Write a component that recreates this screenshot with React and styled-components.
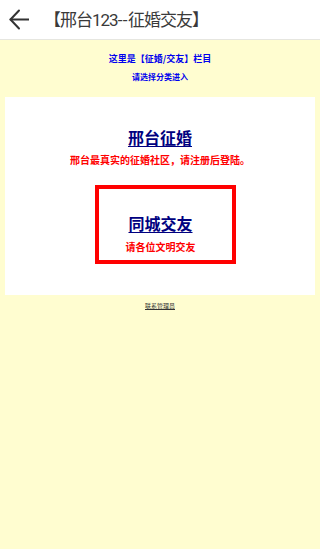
import React from 'react'
import styled, { createGlobalStyle } from 'styled-components'

const GlobalStyle = createGlobalStyle`
    html, body {
        margin: 0;
        padding: 0;
        background-color: #FFFDD0;
        font-family: "Noto Sans CJK SC", "Noto Sans", sans-serif;
    }
`

const Cabecalho = styled.div`
    height: 40px;
    background-color: #ffffff;
    border-bottom: 1px solid #e6e6e0;
    box-sizing: border-box;
    display: flex;
    align-items: center;
    padding-left: 9px;
`

const BotaoVoltar = styled.svg`
    width: 20px;
    height: 21px;
    flex-shrink: 0;
`

const TituloCabecalho = styled.div`
    margin-left: 15px;
    font-family: Roboto, "Noto Sans CJK SC", sans-serif;
    font-size: 17px;
    letter-spacing: -1px;
    color: #3a3a3a;
    line-height: 40px;
`

const Tracos = styled.span`
    letter-spacing: 0.5px;
`

const Conteudo = styled.div`
    text-align: center;
    padding-top: 12px;
`

const Aviso = styled.div`
    color: #0000ee;
    font-weight: bold;
    font-size: ${(props) => props.tamanho}px;
    line-height: 14px;
    margin-bottom: ${(props) => props.espaco || 0}px;
`

const Painel = styled.div`
    margin: 13px 5px 0;
    background-color: #ffffff;
    padding: 30px 0 31px;
`

const Link = styled.a`
    display: block;
    color: #000080;
    font-size: 16px;
    font-weight: bold;
    line-height: 20px;
    text-decoration: underline;
    text-underline-offset: 2px;
`

const Descricao = styled.div`
    color: #ff0000;
    font-size: 10px;
    font-weight: bold;
    line-height: 14px;
    margin-top: ${(props) => props.espaco}px;
`

const CaixaVermelha = styled.div`
    margin: 18px 0 0 90px;
    width: 141px;
    box-sizing: border-box;
    border: 4px solid #ff0000;
    padding: 24px 10px 6px 0;
`

const Rodape = styled.a`
    display: block;
    margin-top: 7px;
    font-size: 6px;
    line-height: 8px;
    color: #333333;
    text-decoration: underline;
`

export default function App() {
    return (
        <>
            <GlobalStyle />
            <Cabecalho>
                <BotaoVoltar viewBox="0 0 20 21" fill="none" stroke="#333333" strokeWidth="2" strokeLinecap="round" strokeLinejoin="round">
                    <path d="M10 1.5 L1.5 10.5 L10 19.5" />
                    <path d="M1.5 10.5 H19.5" />
                </BotaoVoltar>
                <TituloCabecalho>【邢台123<Tracos>--</Tracos>征婚交友】</TituloCabecalho>
            </Cabecalho>
            <Conteudo>
                <Aviso tamanho={9} espaco={4}>这里是【征婚/交友】栏目</Aviso>
                <Aviso tamanho={8}>请选择分类进入</Aviso>
                <Painel>
                    <Link>邢台征婚</Link>
                    <Descricao espaco={6}>邢台最真实的征婚社区，请注册后登陆。</Descricao>
                    <CaixaVermelha>
                        <Link>同城交友</Link>
                        <Descricao espaco={7}>请各位文明交友</Descricao>
                    </CaixaVermelha>
                </Painel>
                <Rodape>联系管理员</Rodape>
            </Conteudo>
        </>
    )
}
